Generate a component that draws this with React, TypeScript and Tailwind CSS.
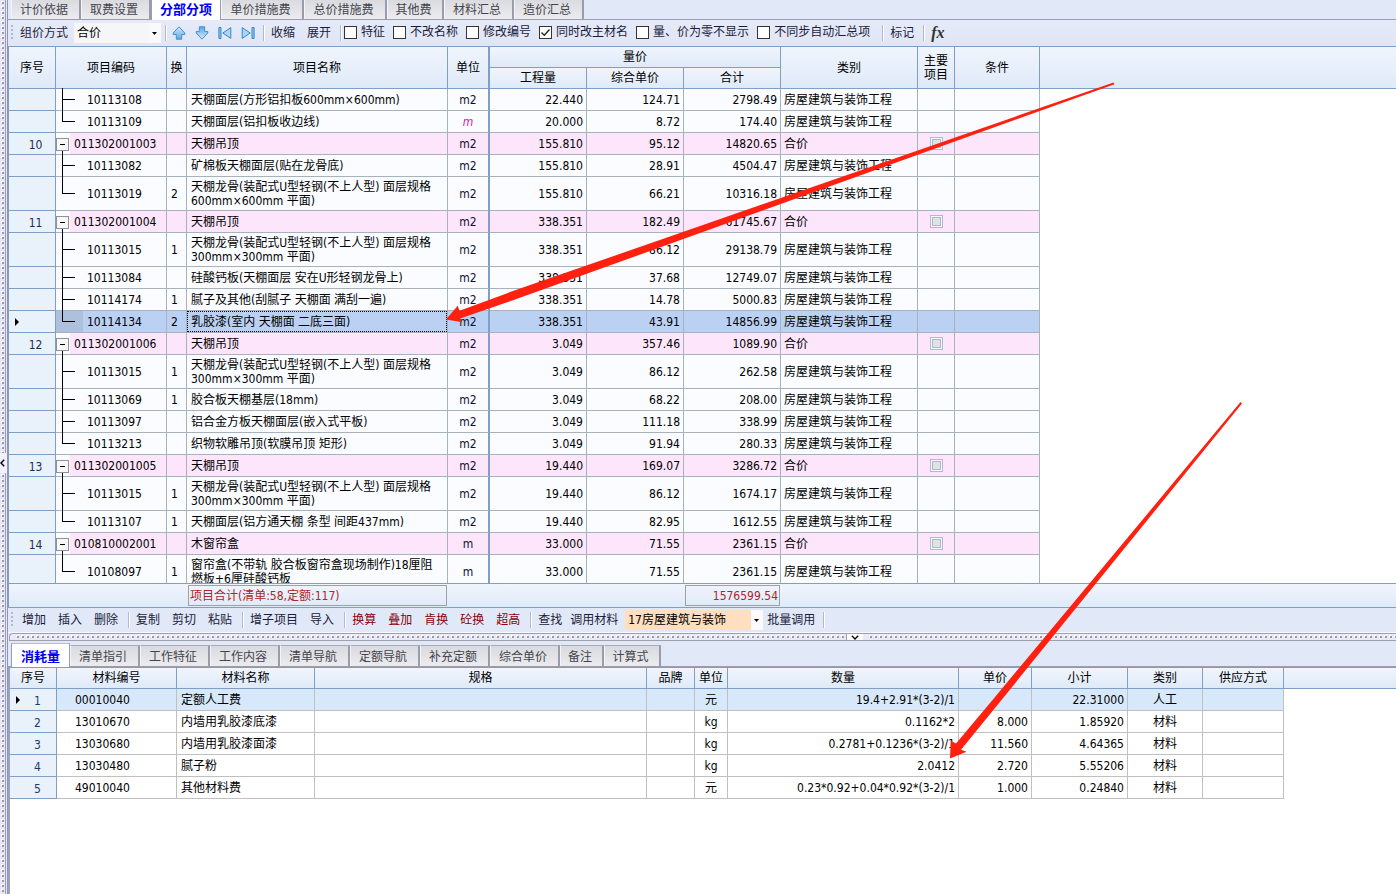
import React from "react";

type Row = {
  no?: string;
  code: string;
  swap?: string;
  name: string;
  unit: string;
  qty: string;
  price: string;
  total: string;
  tall?: boolean;
  last?: boolean;
  selected?: boolean;
  special?: boolean;
};

const WORK = "房屋建筑与装饰工程";

const rows: Row[] = [
  { code: "10113108", name: "天棚面层(方形铝扣板600mm×600mm)", unit: "m2", qty: "22.440", price: "124.71", total: "2798.49" },
  { code: "10113109", name: "天棚面层(铝扣板收边线)", unit: "m", qty: "20.000", price: "8.72", total: "174.40", last: true, special: true },
  { no: "10", code: "011302001003", name: "天棚吊顶", unit: "m2", qty: "155.810", price: "95.12", total: "14820.65" },
  { code: "10113082", name: "矿棉板天棚面层(贴在龙骨底)", unit: "m2", qty: "155.810", price: "28.91", total: "4504.47" },
  { code: "10113019", swap: "2", name: "天棚龙骨(装配式U型轻钢(不上人型) 面层规格600mm×600mm 平面)", unit: "m2", qty: "155.810", price: "66.21", total: "10316.18", tall: true, last: true },
  { no: "11", code: "011302001004", name: "天棚吊顶", unit: "m2", qty: "338.351", price: "182.49", total: "61745.67" },
  { code: "10113015", swap: "1", name: "天棚龙骨(装配式U型轻钢(不上人型) 面层规格300mm×300mm 平面)", unit: "m2", qty: "338.351", price: "86.12", total: "29138.79", tall: true },
  { code: "10113084", name: "硅酸钙板(天棚面层 安在U形轻钢龙骨上)", unit: "m2", qty: "338.351", price: "37.68", total: "12749.07" },
  { code: "10114174", swap: "1", name: "腻子及其他(刮腻子 天棚面 满刮一遍)", unit: "m2", qty: "338.351", price: "14.78", total: "5000.83" },
  { code: "10114134", swap: "2", name: "乳胶漆(室内 天棚面 二底三面)", unit: "m2", qty: "338.351", price: "43.91", total: "14856.99", last: true, selected: true },
  { no: "12", code: "011302001006", name: "天棚吊顶", unit: "m2", qty: "3.049", price: "357.46", total: "1089.90" },
  { code: "10113015", swap: "1", name: "天棚龙骨(装配式U型轻钢(不上人型) 面层规格300mm×300mm 平面)", unit: "m2", qty: "3.049", price: "86.12", total: "262.58", tall: true },
  { code: "10113069", swap: "1", name: "胶合板天棚基层(18mm)", unit: "m2", qty: "3.049", price: "68.22", total: "208.00" },
  { code: "10113097", name: "铝合金方板天棚面层(嵌入式平板)", unit: "m2", qty: "3.049", price: "111.18", total: "338.99" },
  { code: "10113213", name: "织物软雕吊顶(软膜吊顶 矩形)", unit: "m2", qty: "3.049", price: "91.94", total: "280.33", last: true },
  { no: "13", code: "011302001005", name: "天棚吊顶", unit: "m2", qty: "19.440", price: "169.07", total: "3286.72" },
  { code: "10113015", swap: "1", name: "天棚龙骨(装配式U型轻钢(不上人型) 面层规格300mm×300mm 平面)", unit: "m2", qty: "19.440", price: "86.12", total: "1674.17", tall: true },
  { code: "10113107", swap: "1", name: "天棚面层(铝方通天棚 条型 间距437mm)", unit: "m2", qty: "19.440", price: "82.95", total: "1612.55", last: true },
  { no: "14", code: "010810002001", name: "木窗帘盒", unit: "m", qty: "33.000", price: "71.55", total: "2361.15" },
  { code: "10108097", swap: "1", name: "窗帘盒(不带轨 胶合板窗帘盒现场制作)18厘阻燃板+6厘硅酸钙板", unit: "m", qty: "33.000", price: "71.55", total: "2361.15", tall: true, last: true },
];

const materials = [
  { no: "1", code: "00010040", name: "定额人工费", unit: "元", qty: "19.4+2.91*(3-2)/1", price: "", sum: "22.31000", kind: "人工" },
  { no: "2", code: "13010670", name: "内墙用乳胶漆底漆", unit: "kg", qty: "0.1162*2", price: "8.000", sum: "1.85920", kind: "材料" },
  { no: "3", code: "13030680", name: "内墙用乳胶漆面漆", unit: "kg", qty: "0.2781+0.1236*(3-2)/1", price: "11.560", sum: "4.64365", kind: "材料" },
  { no: "4", code: "13030480", name: "腻子粉", unit: "kg", qty: "2.0412", price: "2.720", sum: "5.55206", kind: "材料" },
  { no: "5", code: "49010040", name: "其他材料费", unit: "元", qty: "0.23*0.92+0.04*0.92*(3-2)/1", price: "1.000", sum: "0.24840", kind: "材料" },
];

const topTabs = [
  { label: "计价依据", w: "w-[70px]" },
  { label: "取费设置", w: "w-[70px]" },
  { label: "分部分项", w: "w-[70px]", active: true },
  { label: "单价措施费", w: "w-[83px]" },
  { label: "总价措施费", w: "w-[83px]" },
  { label: "其他费", w: "w-[57px]" },
  { label: "材料汇总", w: "w-[70px]" },
  { label: "造价汇总", w: "w-[70px]" },
];

const bottomTabs = [
  { label: "消耗量", w: "w-[59px]", active: true },
  { label: "清单指引", w: "w-[70px]" },
  { label: "工作特征", w: "w-[70px]" },
  { label: "工作内容", w: "w-[70px]" },
  { label: "清单导航", w: "w-[70px]" },
  { label: "定额导航", w: "w-[70px]" },
  { label: "补充定额", w: "w-[70px]" },
  { label: "综合单价", w: "w-[70px]" },
  { label: "备注", w: "w-[44px]" },
  { label: "计算式", w: "w-[57px]" },
];

const HEAD = "bg-linear-to-b from-[#f0f5fd] to-[#dfeaf8]";
const TH = "border-r border-b border-[#7f9fc6] p-0 text-center align-middle font-normal";

function Separator() {
  return <span className="h-4 w-0.5 border-r border-l border-r-white border-l-[#b4b8c4]" />;
}

function Grip() {
  return <span className="h-4 w-0.5 bg-[repeating-linear-gradient(to_bottom,#b3b7c6_0_2px,transparent_2px_4px)]" />;
}

function ToolButton({ children, red }: { children: React.ReactNode; red?: boolean }) {
  return <button className={red ? "text-[#8b0008]" : "text-[#1c1c3a]"}>{children}</button>;
}

function ArrowUp({ flip }: { flip?: boolean }) {
  return (
    <svg width="14" height="14" viewBox="0 0 14 14" className={flip ? "rotate-180" : ""}>
      <defs>
        <linearGradient id="blueFill" x1="0" y1="0" x2="0" y2="1">
          <stop offset="0" stopColor="#d3ebfd" />
          <stop offset="1" stopColor="#5aa6e2" />
        </linearGradient>
      </defs>
      <path d="M7 0.8 L12.8 7 V8.5 H9.7 V13.2 H4.3 V8.5 H1.2 V7 Z" fill="url(#blueFill)" stroke="#4a8fcb" strokeLinejoin="round" />
    </svg>
  );
}

function SkipIcon({ flip }: { flip?: boolean }) {
  return (
    <svg width="14" height="14" viewBox="0 0 14 14" className={flip ? "rotate-180" : ""}>
      <path d="M0.9 1.5 H3 V12.5 H0.9 Z" fill="#8cc4f0" stroke="#3b86c8" />
      <path d="M12.8 1.6 V12.4 L4.8 7 Z" fill="#a9d6f7" stroke="#3b86c8" strokeLinejoin="round" />
    </svg>
  );
}

function Check({ label, checked }: { label: string; checked?: boolean }) {
  return (
    <label className="flex items-center gap-1 pr-2 text-[#1c1c3a]">
      <span className="relative flex">
        <input type="checkbox" defaultChecked={checked} className="peer size-[13px] appearance-none border border-[#333] bg-white" />
        <svg viewBox="0 0 13 13" className="pointer-events-none absolute inset-0 hidden size-[13px] peer-checked:block">
          <path d="M2.5 6.5 L5.3 9.3 L10.5 3.5" fill="none" stroke="#222" strokeWidth="1.3" />
        </svg>
      </span>
      <span>{label}</span>
    </label>
  );
}

function Combo({ label, value, width, tint }: { label: string; value: string; width: string; tint: string }) {
  return (
    <span className={`relative flex h-5 bg-[#fafafc] ${width}`}>
      <select aria-label={label} className={`mr-3 h-5 flex-1 appearance-none px-[3px] text-black ${tint}`}>
        <option>{value}</option>
      </select>
      <svg width="5" height="3" viewBox="0 0 5 3" className="pointer-events-none absolute top-[9px] right-1">
        <path d="M0 0 H5 L2.5 3 Z" fill="#000" />
      </svg>
    </span>
  );
}

function Tabs({ tabs, label }: { tabs: { label: string; w: string; active?: boolean }[]; label: string }) {
  return (
    <div role="tablist" aria-label={label} className="flex items-end border-b border-[#9a9db0] pl-[3px]">
      {tabs.map((t) => (
        <button
          key={t.label}
          role="tab"
          aria-selected={!!t.active}
          className={
            t.active
              ? `${t.w} -mb-px h-full min-h-6 border-t border-r border-l border-[#9a9db0] border-t-[#b8bac8] bg-white pt-0.5 text-[13px] font-bold text-[#0000f0]`
              : `${t.w} h-[21px] border-t border-r-2 border-l border-t-[#a9abb9] border-r-[#9a9bab] border-l-[#f4f4f7] bg-linear-to-b from-[#d9dadf] to-[#ececef] pt-0.5 pr-[3px] text-[#44444e]`
          }
        >
          {t.label}
        </button>
      ))}
    </div>
  );
}

function TreeCell({ row }: { row: Row }) {
  const height = row.tall ? "h-[34px]" : "h-[22px]";
  if (row.no) {
    return (
      <div className="flex h-[21px]">
        <div className="flex w-[14px] shrink-0 flex-col items-start bg-[#fafcff] pt-[5px]">
          <button aria-label="折叠" className="flex size-[13px] shrink-0 items-center justify-center border border-[#8d9199] bg-[#f8f8f8]">
            <span className="h-px w-[5px] bg-black" />
          </button>
          <span className="ml-[6px] w-px flex-1 bg-black" />
        </div>
        <span className="flex items-center pl-1">{row.code}</span>
      </div>
    );
  }
  return (
    <div className={`relative -mt-px flex ${height}`}>
      <div className={`mt-px flex w-[27px] shrink-0 pl-[6px] ${row.selected ? "bg-[#adc1de]" : ""}`}>
        <div className="-mt-px flex w-[13px] flex-col">
          <span className="flex-1 border-b border-l border-black" />
          <span className={`flex-1 ${row.last ? "" : "border-l border-black"}`} />
        </div>
      </div>
      <span className="flex items-center pt-px pl-1">{row.code}</span>
    </div>
  );
}

function ItemRow({ row }: { row: Row }) {
  const group = !!row.no;
  const bg = group ? "bg-[#fde6fb]" : row.selected ? "bg-[#bbd1f3]" : "bg-[#fafcff]";
  const td = `border-r border-b border-[#a7b3bb] py-0 ${bg}`;
  return (
    <tr className={row.tall ? "h-[34px]" : "h-[22px]"}>
      <td className="border-r border-b border-[#7f9fc6] bg-[#e9f1fb] p-0">
        {row.selected ? (
          <svg width="4" height="8" viewBox="0 0 4 8" className="ml-[6px]">
            <path d="M0 0 L4 4 L0 8 Z" fill="#000" />
          </svg>
        ) : (
          <span className="block pt-0.5 pl-[7px] text-center text-[#1f2f4f]">{row.no}</span>
        )}
      </td>
      <td className={`${td} px-0`}>
        <TreeCell row={row} />
      </td>
      <td className={`${td} px-0 pr-1 text-center`}>{row.swap}</td>
      <td className={`${td} p-0`}>
        <div
          className={`flex items-center pr-2 leading-[14px] ${row.tall ? "h-[33px]" : "h-[21px]"} ${
            row.selected ? "border border-dotted border-black pl-[3px]" : "pl-1"
          }`}
        >
          {row.name}
        </div>
      </td>
      <td className={`border-r-2 border-b border-r-[#7f9fc6] border-b-[#a7b3bb] p-0 text-center ${bg} ${row.special ? "text-[#e0209a] italic" : "text-[#101030]"}`}>
        {row.unit}
      </td>
      <td className={`${td} pr-[3px] text-right`}>{row.qty}</td>
      <td className={`${td} pr-[3px] text-right`}>{row.price}</td>
      <td className={`${td} pr-[3px] text-right`}>{row.total}</td>
      <td className={`${td} pl-[3px]`}>{group ? "合价" : WORK}</td>
      <td className={`${td} px-0`}>
        {group && (
          <input
            type="checkbox"
            disabled
            aria-label="主要项目"
            className="mx-auto block size-[13px] appearance-none border border-[#a9bdd9] bg-[#dfe3e8] shadow-[inset_0_0_0_1px_#f6f8fb,inset_0_0_0_2px_#b3b8bf]"
          />
        )}
      </td>
      <td className={`${td} px-0`} />
      <td className="p-0" />
    </tr>
  );
}

function ItemTable() {
  return (
    <table className="w-full table-fixed border-separate border-spacing-0">
      <colgroup>
        <col className="w-[47px]" />
        <col className="w-[111px]" />
        <col className="w-5" />
        <col className="w-[261px]" />
        <col className="w-[42px]" />
        <col className="w-[97px]" />
        <col className="w-[97px]" />
        <col className="w-[97px]" />
        <col className="w-[137px]" />
        <col className="w-[37px]" />
        <col className="w-[85px]" />
        <col />
      </colgroup>
      <thead>
        <tr className="h-[21px]">
          <th rowSpan={2} className={`${TH} ${HEAD}`}>序号</th>
          <th rowSpan={2} className={`${TH} ${HEAD}`}>项目编码</th>
          <th rowSpan={2} className={`${TH} ${HEAD}`}>换</th>
          <th rowSpan={2} className={`${TH} ${HEAD}`}>项目名称</th>
          <th rowSpan={2} className={`border-r-2 border-b border-[#7f9fc6] p-0 font-normal ${HEAD}`}>单位</th>
          <th colSpan={3} className={`${TH} ${HEAD}`}>量价</th>
          <th rowSpan={2} className={`${TH} ${HEAD}`}>类别</th>
          <th rowSpan={2} className={`${TH} leading-[14px] ${HEAD}`}>主要<br />项目</th>
          <th rowSpan={2} className={`${TH} ${HEAD}`}>条件</th>
          <th rowSpan={2} className={`border-b border-[#7f9fc6] p-0 ${HEAD}`} />
        </tr>
        <tr className="h-[21px]">
          <th className={`${TH} ${HEAD}`}>工程量</th>
          <th className={`${TH} ${HEAD}`}>综合单价</th>
          <th className={`${TH} ${HEAD}`}>合计</th>
        </tr>
      </thead>
      <tbody>
        {rows.map((r, i) => (
          <ItemRow key={i} row={r} />
        ))}
      </tbody>
    </table>
  );
}

function MaterialTable() {
  const heads = ["序号", "材料编号", "材料名称", "规格", "品牌", "单位", "数量", "单价", "小计", "类别", "供应方式"];
  return (
    <table className="w-full table-fixed border-separate border-spacing-0">
      <colgroup>
        <col className="w-[47px]" />
        <col className="w-[120px]" />
        <col className="w-[138px]" />
        <col className="w-[332px]" />
        <col className="w-12" />
        <col className="w-[33px]" />
        <col className="w-[231px]" />
        <col className="w-[73px]" />
        <col className="w-24" />
        <col className="w-[75px]" />
        <col className="w-[81px]" />
        <col />
      </colgroup>
      <thead>
        <tr className="h-[21px]">
          {heads.map((h) => (
            <th key={h} className={`${TH} ${HEAD}`}>{h}</th>
          ))}
          <th className={`border-b border-[#7f9fc6] p-0 ${HEAD}`} />
        </tr>
      </thead>
      <tbody>
        {materials.map((m, i) => {
          const td = `border-r border-b border-[#c0c0c0] py-0 ${i === 0 ? "bg-[#d7e8fa]" : "bg-white"}`;
          return (
            <tr key={m.no} className="h-[22px]">
              <td className="border-r border-b border-[#7f9fc6] bg-[#e9f1fb] p-0 text-[#1f3a6f]">
                <div className="flex items-center pl-[6px]">
                  <svg width="4" height="8" viewBox="0 0 4 8">
                    {i === 0 && <path d="M0 0 L4 4 L0 8 Z" fill="#000" />}
                  </svg>
                  <span className="pt-0.5 pl-[14px]">{m.no}</span>
                </div>
              </td>
              <td className={`${td} pl-[18px]`}>{m.code}</td>
              <td className={`${td} pl-1`}>{m.name}</td>
              <td className={td} />
              <td className={td} />
              <td className={`${td} text-center`}>{m.unit}</td>
              <td className={`${td} pr-[3px] text-right`}>{m.qty}</td>
              <td className={`${td} pr-[3px] text-right`}>{m.price}</td>
              <td className={`${td} pr-[3px] text-right`}>{m.sum}</td>
              <td className={`${td} text-center`}>{m.kind}</td>
              <td className={td} />
              <td className="p-0" />
            </tr>
          );
        })}
      </tbody>
    </table>
  );
}

function VerticalDots({ grow }: { grow: string }) {
  return (
    <div className={`flex w-[6px] border-r border-[#9b9db0] pl-0.5 ${grow}`}>
      <span className="w-0.5 bg-[repeating-linear-gradient(to_bottom,transparent_0_2px,#9a9aa6_2px_4px,transparent_4px_5px)] drop-shadow-[-1px_-1px_0_#fff]" />
    </div>
  );
}

function HorizontalDots({ size }: { size: string }) {
  return (
    <div className={`flex items-center pl-1 ${size}`}>
      <span className="h-0.5 w-full bg-[repeating-linear-gradient(to_right,transparent_0_3px,#9a9aa6_3px_5px)] drop-shadow-[-1px_-1px_0_#fff]" />
    </div>
  );
}

export default function App() {
  return (
    <div className="relative flex h-screen overflow-hidden bg-[#e1e8f8] font-['DejaVu_Sans_Condensed','Noto_Sans','Noto_Sans_CJK_SC',sans-serif] text-[12px] leading-4 text-black">
      <aside className="flex w-2 shrink-0 flex-col border-r border-[#8f96b3] bg-[#e6e6f6]">
        <VerticalDots grow="flex-[453_0_0%]" />
        <button aria-label="收起" className="flex h-5 shrink-0 items-center bg-[#f1f1fb]">
          <svg width="5" height="8" viewBox="0 0 5 8">
            <path d="M4.2 0.8 L1 4 L4.2 7.2" fill="none" stroke="#000" strokeWidth="1.5" />
          </svg>
        </button>
        <VerticalDots grow="flex-[421_0_0%]" />
      </aside>

      <main className="flex min-w-0 flex-1 flex-col">
        <div className="flex h-5 shrink-0 flex-col justify-end">
          <Tabs tabs={topTabs} label="主标签" />
        </div>

        <div role="toolbar" className="flex h-[26px] shrink-0 items-center bg-linear-to-b from-[#e6eaf8] to-[#dfe6f7] pl-[3px] whitespace-nowrap">
          <Grip />
          <span className="pr-[6px] pl-[7px] text-[#1c1c3a]">组价方式</span>
          <Combo label="组价方式" value="合价" width="w-[87px]" tint="bg-[#f6f6f8]" />
          <div className="flex items-center pl-[4px]">
            <Separator />
          </div>
          <div className="flex items-center gap-[9px] pr-2 pl-[5px]">
            <button aria-label="上移"><ArrowUp /></button>
            <button aria-label="下移"><ArrowUp flip /></button>
            <button aria-label="首条"><SkipIcon /></button>
            <button aria-label="末条"><SkipIcon flip /></button>
          </div>
          <Separator />
          <div className="flex gap-3 pr-[9px] pl-[6px]">
            <ToolButton>收缩</ToolButton>
            <ToolButton>展开</ToolButton>
          </div>
          <Separator />
          <div className="-mt-0.5 flex pl-0.5">
            <Check label="特征" />
            <Check label="不改名称" />
            <Check label="修改编号" />
            <Check label="同时改主材名" checked />
            <Check label="量、价为零不显示" />
            <Check label="不同步自动汇总项" />
          </div>
          <div className="flex items-center gap-[6px] pl-1">
            <Separator />
            <ToolButton>标记</ToolButton>
            <span className="flex pl-[3px]"><Separator /></span>
            <button className="font-['Liberation_Serif',serif] text-[16px] font-bold text-[#333] italic">fx</button>
          </div>
        </div>

        <section className="min-h-0 flex-1 overflow-hidden border-t border-b border-l border-[#7f9fc6] bg-white">
          <ItemTable />
        </section>

        <div className={`flex h-6 shrink-0 items-center border-b border-l border-[#7f9fc6] pl-[179px] text-[#b02428] ${HEAD}`}>
          <output className="h-[21px] w-[259px] border border-[#a0a0a0] pt-0.5 pl-px">项目合计(清单:58,定额:117)</output>
          <output className="ml-[238px] h-[21px] w-[95px] border border-[#a0a0a0] pt-0.5 pr-px text-right">1576599.54</output>
        </div>

        <div role="toolbar" className="flex h-[25px] shrink-0 items-center border-b border-[#f8f8fd] pl-[3px] whitespace-nowrap">
          <Grip />
          <div className="flex items-center gap-3 pl-[9px]">
            <ToolButton>增加</ToolButton>
            <ToolButton>插入</ToolButton>
            <ToolButton>删除</ToolButton>
          </div>
          <div className="flex items-center pl-[10px]"><Separator /></div>
          <div className="flex items-center gap-3 pl-[6px]">
            <ToolButton>复制</ToolButton>
            <ToolButton>剪切</ToolButton>
            <ToolButton>粘贴</ToolButton>
          </div>
          <div className="flex items-center pl-[10px]"><Separator /></div>
          <div className="flex items-center gap-3 pl-[6px]">
            <ToolButton>增子项目</ToolButton>
            <ToolButton>导入</ToolButton>
          </div>
          <div className="flex items-center pl-[10px]"><Separator /></div>
          <div className="flex items-center gap-3 pl-[6px]">
            <ToolButton red>换算</ToolButton>
            <ToolButton red>叠加</ToolButton>
            <ToolButton red>肯换</ToolButton>
            <ToolButton red>砼换</ToolButton>
            <ToolButton red>超高</ToolButton>
          </div>
          <div className="flex items-center pl-[10px]"><Separator /></div>
          <div className="flex items-center gap-2 pr-[7px] pl-[6px]">
            <ToolButton>查找</ToolButton>
            <ToolButton>调用材料</ToolButton>
          </div>
          <Combo label="专业" value="17房屋建筑与装饰" width="w-[138px]" tint="bg-[#ffdfc0]" />
          <div className="flex items-center gap-2 pl-1">
            <ToolButton>批量调用</ToolButton>
            <Separator />
          </div>
        </div>

        <div className="ml-px flex h-2 shrink-0 rounded-tl-[4px] border-t border-b border-l border-[#a0a0ac] bg-[#e9e9f8]">
          <HorizontalDots size="w-[836px]" />
          <button aria-label="收起下方面板" className="flex w-[17px] items-center justify-center border-l border-[#a0a0ac] bg-white">
            <svg width="8" height="5" viewBox="0 0 8 5">
              <path d="M0.8 0.8 L4 4 L7.2 0.8" fill="none" stroke="#000" strokeWidth="1.4" />
            </svg>
          </button>
          <HorizontalDots size="flex-1" />
        </div>

        <div className="flex h-[26px] shrink-0 flex-col justify-end">
          <Tabs tabs={bottomTabs} label="明细标签" />
        </div>

        <section className="h-[227px] shrink-0 overflow-hidden border-t border-l-2 border-[#7f9fc6] border-l-[#98a3c2] bg-white">
          <MaterialTable />
        </section>
      </main>

      <svg width="1396" height="894" viewBox="0 0 1396 894" className="pointer-events-none absolute top-0 left-0 max-w-none">
        <path d="M446 319.5 L457.7 305.7 L459.5 310.7 L515 290.3 L1113.5 82.5 L1114.5 84.2 L515 299.5 L460.2 318.5 L462.5 322.3 Z" fill="#ff2010" />
        <path d="M950 758.5 L950.7 740.7 L956 743.5 L992.5 700 L1240.5 402 L1242 403.5 L1001.5 700 L961 749.8 L966.5 751.8 Z" fill="#ff2010" />
      </svg>
    </div>
  );
}
